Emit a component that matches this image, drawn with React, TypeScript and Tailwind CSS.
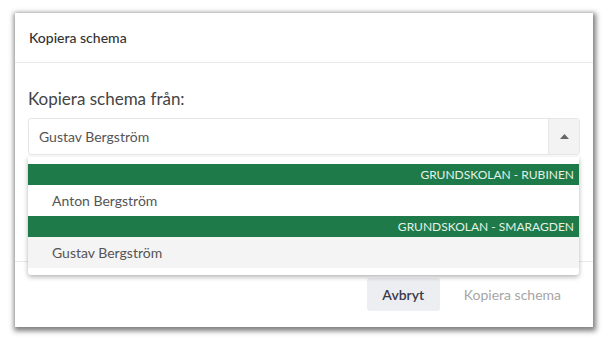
import React from 'react';

const groups = [
  { school: 'Grundskolan - Rubinen', people: ['Anton Bergström'] },
  { school: 'Grundskolan - Smaragden', people: ['Gustav Bergström'] },
];

const CopySchedule = () => {
  const selected = 'Gustav Bergström';

  return (
    <div className="bg-white w-[609px] h-[341px] pt-[13px] pl-[15px] font-['Lato',sans-serif]">
      <div className="w-[578px] h-[314px] bg-white shadow-[1px_2px_5px_2px_rgba(0,0,0,0.5)] flex flex-col">
        <div className="h-[50px] flex items-center px-[14px] border-b border-[#e9e9e9] text-[14px] font-medium text-[#333]">
          Kopiera schema
        </div>

        <div className="relative h-[199px] pt-[25px] px-[13px] border-b border-[#e9e9e9]">
          <label className="block text-[17px] leading-[22px] text-[#444] mb-[8px]">
            Kopiera schema från:
          </label>
          <div className="h-[37px] flex border border-[#e6e6e6] rounded-[3px]">
            <div className="flex-1 flex items-center pl-[10px] text-[14px] text-[#555]">{selected}</div>
            <div className="w-[31px] flex items-center justify-center bg-[#f3f3f3] border-l border-[#e6e6e6]">
              <svg width="9" height="5" viewBox="0 0 9 5">
                <path d="M0 5 L4.5 0 L9 5 Z" fill="#666" />
              </svg>
            </div>
          </div>

          <div className="absolute left-[13px] right-[14px] top-[94px] z-10 bg-white py-[7px] shadow-[0_2px_5px_rgba(0,0,0,0.3)] rounded-b-[3px]">
            {groups.map((group) => (
              <div key={group.school}>
                <div className="h-[21px] bg-[#1e7a48] flex items-center justify-end pr-[5px] text-[12px] uppercase text-[#e4f1e9]">
                  {group.school}
                </div>
                {group.people.map((name) => (
                  <div
                    key={name}
                    className={`h-[31px] flex items-center pl-[24px] text-[14px] text-[#555] ${
                      name === selected ? 'bg-[#f4f4f4]' : 'bg-white'
                    }`}
                  >
                    {name}
                  </div>
                ))}
              </div>
            ))}
          </div>
        </div>

        <div className="flex-1 flex items-center justify-end gap-[8px] pr-[16px] pb-[1px]">
          <button className="h-[33px] w-[73px] rounded-[3px] bg-[#eceef2] text-[14px] font-semibold text-[#3b3b48]">
            Avbryt
          </button>
          <button className="h-[33px] px-[16px] text-[14px] text-[#a6a6a6]">
            Kopiera schema
          </button>
        </div>
      </div>
    </div>
  );
};

export default CopySchedule;
